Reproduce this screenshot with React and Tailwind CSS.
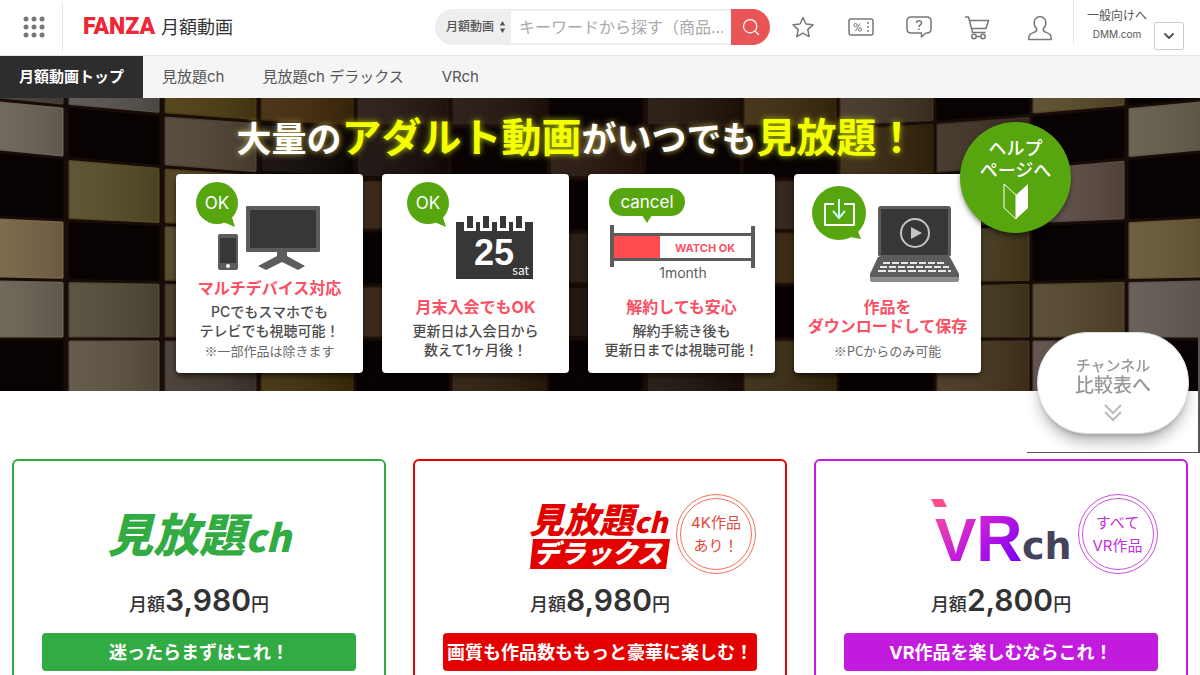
import { ChevronDown, Search } from "lucide-react";

const dark = "#080302";

// column edges of the wall, left to right
const columns = [
  [-30, 62], [70, 158], [166, 255], [262, 352], [358, 447], [453, 545], [551, 641],
  [648, 738], [745, 835], [841, 932], [938, 1028], [1034, 1123], [1130, 1222],
];

// one list per column, top to bottom
const tileColors = [
  ["#4a4038", "#6b6458", dark, "#7a6648", "#6a6455", dark],
  ["#55504a", dark, "#544a26", dark, "#504936", "#5a5040"],
  ["#4a3a10", "#4d4233", "#4a3a18", "#4a4322", "#3d3420", "#40362c"],
  ["#3f280a", "#0c0504", "#33200c", "#120905", "#33240c", "#3c2c0a"],
  ["#241610", "#140a07", "#2e1c0c", dark, "#2e1c0c", dark],
  ["#20120c", dark, "#23140a", "#160b06", dark, "#2a1a0a"],
  [dark, "#22120a", dark, "#20120a", "#160b06", dark],
  ["#20120a", dark, "#24140a", "#24160a", dark, "#1c1008"],
  ["#3a280c", dark, "#2e1e14", "#34220a", dark, "#36280e"],
  ["#3e3222", "#33240c", "#2e1e14", "#34220a", "#2e1e10", dark],
  [dark, "#3c2e22", "#3c2e1a", "#46391c", "#44371e", "#43331c"],
  ["#554828", dark, "#5a4a42", dark, "#52442a", "#5a4a44"],
  [dark, "#605a48", dark, "#655434", "#5e564e", dark],
];

const rowLines = [-26, 29, 81, 133, 187, 241, 299];
const rowDrops = [27, 27, 27, 14, 6, 0, 0];

const lineAt = (row, x) => {
  const edge = Math.max(0, (Math.abs(x - 600) / 600 - 0.4) / 0.6);
  return rowLines[row] - rowDrops[row] * Math.pow(edge, 1.3);
};

const TileWall = () => (
  <svg
    className="absolute inset-0 h-full w-full"
    viewBox="0 0 1200 293"
    preserveAspectRatio="xMidYMid slice"
    aria-hidden="true"
  >
    <defs>
      <linearGradient id="sheen" x1="0" x2="1">
        <stop offset="0" stopColor="#fff" stopOpacity="0.07" />
        <stop offset="1" stopColor="#000" stopOpacity="0.12" />
      </linearGradient>
    </defs>
    <rect width="1200" height="293" fill="#180c08" />
    {columns.map(([x1, x2], c) =>
      tileColors[c].map((color, r) => {
        const points = [
          [x1, lineAt(r, x1) + 3],
          [x2, lineAt(r, x2) + 3],
          [x2, lineAt(r + 1, x2) - 3],
          [x1, lineAt(r + 1, x1) - 3],
        ].join(" ");
        return (
          <g key={`${c}-${r}`} strokeLinejoin="round" strokeWidth="3">
            <polygon points={points} fill={color} stroke={color} />
            {color !== dark && <polygon points={points} fill="url(#sheen)" />}
          </g>
        );
      })
    )}
  </svg>
);

const OkBubble = ({ cx }) => (
  <g>
    <circle cx={cx} cy="29" r="21" fill="#58a60f" />
    <path d={`M${cx + 4} 47 L${cx + 18} 53 L${cx + 14} 40 Z`} fill="#58a60f" />
    <text x={cx} y="35" textAnchor="middle" fontSize="17" fill="#fff">OK</text>
  </g>
);

const DevicesArt = () => (
  <svg width="187" height="105" viewBox="0 0 187 105" aria-hidden="true">
    <OkBubble cx={41} />
    <rect x="42" y="60" width="20" height="36" rx="2" fill="#5c5c5c" />
    <rect x="44" y="64" width="16" height="25" fill="#373737" />
    <circle cx="52" cy="92" r="2" fill="#fff" />
    <rect x="70" y="32" width="74" height="46" rx="1" fill="#5c5c5c" />
    <rect x="74" y="36" width="66" height="38" fill="#373737" />
    <path d="M101 78 H111 V82 L129 92 L122 96 L106 88 L90 96 L82 92 L101 82 Z" fill="#5c5c5c" />
  </svg>
);

const CalendarArt = () => (
  <svg width="187" height="124" viewBox="0 0 187 124" aria-hidden="true">
    <OkBubble cx={46} />
    <rect x="74" y="48" width="77" height="57" fill="#373737" />
    {[88, 104, 121, 137].map((x) => (
      <g key={x}>
        <rect x={x - 6} y="46" width="12" height="11" fill="#fff" />
        <rect x={x - 3} y="42" width="6" height="12" fill="#373737" />
      </g>
    ))}
    <text x="112" y="91" textAnchor="middle" fontSize="36" fontWeight="700" fill="#fff" fontFamily="Liberation Sans, Arial, sans-serif">25</text>
    <text x="147" y="101" textAnchor="end" fontSize="12" fill="#fff" fontFamily="Noto Sans CJK JP, sans-serif">sat</text>
  </svg>
);

const CancelArt = () => (
  <svg width="187" height="124" viewBox="0 0 187 124" aria-hidden="true">
    <rect x="21" y="14" width="76" height="28" rx="14" fill="#58a60f" />
    <path d="M54 41 H64 L59 49 Z" fill="#58a60f" />
    <text x="59" y="34" textAnchor="middle" fontSize="17" fill="#fff">cancel</text>
    <rect x="25" y="59" width="140" height="3" fill="#5c5c5c" />
    <rect x="25" y="84" width="140" height="3" fill="#5c5c5c" />
    <rect x="26" y="62" width="46" height="22" fill="#ff4d4f" />
    <rect x="22" y="51" width="4" height="42" fill="#5c5c5c" />
    <rect x="163" y="52" width="4" height="42" fill="#5c5c5c" />
    <text x="117" y="78" textAnchor="middle" fontSize="11" fontWeight="700" fill="#fa5064">WATCH OK</text>
    <text x="95" y="104" textAnchor="middle" fontSize="14" fill="#5c5c5c">1month</text>
  </svg>
);

const DownloadArt = () => (
  <svg width="187" height="124" viewBox="0 0 187 124" aria-hidden="true">
    <circle cx="45" cy="39" r="27" fill="#58a60f" />
    <path d="M50 62 L67 65 L62 52 Z" fill="#58a60f" />
    <path d="M40 30 H31 V51 H60 V30 H50" fill="none" stroke="#fff" strokeWidth="2" strokeLinejoin="round" />
    <path d="M45 25 V43 M39 37 L45 44 L51 37" fill="none" stroke="#c9fff2" strokeWidth="2" />
    <rect x="84" y="32" width="73" height="51" rx="3" fill="#5c5c5c" />
    <rect x="87" y="35" width="67" height="46" fill="#373737" />
    <circle cx="121" cy="59" r="14" fill="none" stroke="#c4c4c4" strokeWidth="2" />
    <path d="M117 53 V65 L128 59 Z" fill="#c4c4c4" />
    <path d="M84 83 H156 L165 100 V105 Q165 108 162 108 H79 Q76 108 76 105 V100 Z" fill="#5c5c5c" />
    <path d="M76 103 H165 V105 Q165 108 162 108 H79 Q76 108 76 105 Z" fill="#8c8c8c" />
    <g stroke="#e8e8e8" strokeWidth="2">
      <path d="M89 89 H152" strokeDasharray="7 2" />
      <path d="M86 93 H155" strokeDasharray="7 2" />
      <path d="M84 97 H157" strokeDasharray="8 2" />
    </g>
  </svg>
);

const features = [
  {
    art: <DevicesArt />,
    title: ["マルチデバイス対応"],
    lines: ["PCでもスマホでも", "テレビでも視聴可能！"],
    note: "※一部作品は除きます",
  },
  {
    art: <CalendarArt />,
    title: ["月末入会でもOK"],
    lines: ["更新日は入会日から", "数えて1ヶ月後！"],
  },
  {
    art: <CancelArt />,
    title: ["解約しても安心"],
    lines: ["解約手続き後も", "更新日までは視聴可能！"],
  },
  {
    art: <DownloadArt />,
    title: ["作品を", "ダウンロードして保存"],
    lines: [],
    note: "※PCからのみ可能",
  },
];

const FeatureCard = ({ art, title, lines, note }) => (
  <li className="flex min-h-[199px] w-[187px] flex-col items-center rounded-sm bg-white pb-3 text-center whitespace-nowrap shadow-md shadow-black/50">
    {art}
    <h2 className="mb-1 text-base leading-[19px] font-bold text-[#fa5064]">
      {title.map((line) => (
        <span key={line} className="block">{line}</span>
      ))}
    </h2>
    {lines.map((line) => (
      <p key={line} className="text-sm leading-[19px] font-medium text-[#4c4c4c]">{line}</p>
    ))}
    {note && (
      <p className="mt-auto font-['Noto_Sans_CJK_JP',sans-serif] text-[13px] leading-5 text-[#6a6a6a]">{note}</p>
    )}
  </li>
);

const StarIcon = () => (
  <path d="M13 3.5 L16 10 L23 10.8 L17.8 15.6 L19.2 22.6 L13 19.1 L6.8 22.6 L8.2 15.6 L3 10.8 L10 10 Z" />
);

const CouponIcon = () => (
  <g>
    <rect x="1" y="5" width="24" height="16" rx="2" />
    <path d="M20 8 V19" strokeDasharray="2 2" />
    <circle cx="7.5" cy="11" r="1.6" strokeWidth="1" />
    <circle cx="12" cy="15.5" r="1.6" strokeWidth="1" />
    <path d="M12 9.5 L7.5 17" strokeWidth="1" />
  </g>
);

const HelpIcon = () => (
  <g>
    <path d="M5 3 H21 Q25 3 25 7 V15 Q25 19 21 19 H20 L15.5 23 V19 H5 Q1 19 1 15 V7 Q1 3 5 3 Z" />
    <path d="M10.5 9 Q10.5 6.8 13 6.8 Q15.5 6.8 15.5 9 Q15.5 10.3 14.2 11 Q13 11.6 13 13 M13 14.5 V16" />
  </g>
);

const CartIcon = () => (
  <g>
    <path d="M1 3 H4.5 L8.5 18.5 H21.5 M5.6 6.5 H24.5 L22 14.5 H7.6" />
    <circle cx="10" cy="22.5" r="2.2" />
    <circle cx="19" cy="22.5" r="2.2" />
    <path d="M12 22.5 H17" />
  </g>
);

const UserIcon = () => (
  <path d="M13 2.8 C8.8 2.8 6.8 6 7.2 9.8 C7.5 12.2 8.4 13.6 9.8 15 C10 17 9 17.8 7 18.4 C3 19.6 1.6 21 1.6 25.4 H24.4 C24.4 21 23 19.6 19 18.4 C17 17.8 16 17 16.2 15 C17.6 13.6 18.5 12.2 18.8 9.8 C19.2 6 17.2 2.8 13 2.8 Z" />
);

const headerLinks = [
  { label: "お気に入り", icon: <StarIcon /> },
  { label: "クーポン", icon: <CouponIcon /> },
  { label: "ヘルプ", icon: <HelpIcon /> },
  { label: "カート", icon: <CartIcon /> },
  { label: "アカウント", icon: <UserIcon /> },
];

const Header = () => (
  <header className="flex h-14 items-start border-b border-[#e6e6e6] bg-white">
    <button type="button" aria-label="サービス一覧" className="mt-0.5 flex h-[50px] w-[63px] items-center justify-center border-r border-[#e6e6e6] pl-1.5">
      <svg width="24" height="24" viewBox="0 0 24 24" fill="#777" aria-hidden="true">
        {[4, 12, 20].map((y) => [4, 12, 20].map((x) => <circle key={`${x}-${y}`} cx={x} cy={y} r="2.5" />))}
      </svg>
    </button>
    <a href="#" className="flex h-[55px] items-center gap-1.5 pl-5 whitespace-nowrap">
      <span className="font-['Roboto',sans-serif] text-[23px] font-black text-[#ed2736]">FANZA</span>
      <span className="text-lg text-[#333]">月額動画</span>
    </a>

    <form className="mt-[9px] ml-auto flex h-9 overflow-hidden rounded-full" onSubmit={(e) => e.preventDefault()}>
      <div className="relative">
        <select aria-label="カテゴリ" className="h-9 w-[76px] appearance-none bg-[#eee] pl-[11px] text-xs font-medium text-[#555]">
          <option>月額動画</option>
        </select>
        <svg className="pointer-events-none absolute top-3 right-[5px]" width="7" height="12" viewBox="0 0 7 12" fill="#555" aria-hidden="true">
          <path d="M3.5 0 L6.2 4.5 H0.8 Z M3.5 12 L6.2 7.5 H0.8 Z" />
        </svg>
      </div>
      <input
        type="text"
        aria-label="キーワード"
        placeholder="キーワードから探す（商品..."
        className="w-[220px] border-y-2 border-[#eee] px-2 text-[#333] outline-none placeholder:text-[#aaa]"
      />
      <button type="submit" aria-label="検索" className="flex w-[39px] items-center justify-center bg-[#e95557] text-white">
        <Search size={20} strokeWidth={1.5} />
      </button>
    </form>

    <nav aria-label="アカウントメニュー" className="mt-[14px] ml-5 flex gap-8">
      {headerLinks.map(({ label, icon }) => (
        <a key={label} href="#" aria-label={label} className="flex justify-center last:w-9">
          <svg width="26" height="28" viewBox="0 0 26 28" fill="none" stroke="#777" strokeWidth="1.5" strokeLinejoin="round" aria-hidden="true">
            {icon}
          </svg>
        </a>
      ))}
    </nav>

    <div className="ml-[15px] flex h-11 border-l border-[#e6e6e6] pt-[7px] pr-4">
      <div className="flex w-20 flex-col items-center pl-1.5 whitespace-nowrap text-[#555]">
        <a href="#" className="text-xs leading-[18px]">一般向けへ</a>
        <a href="#" className="text-[10px] leading-[18px]">DMM.com</a>
      </div>
      <button type="button" aria-label="メニューを開く" className="mt-[15px] flex h-7 w-[30px] items-center justify-center rounded-xs border border-[#ccc] bg-white text-[#555]">
        <ChevronDown size={16} strokeWidth={3} />
      </button>
    </div>
  </header>
);

const tabs = ["月額動画トップ", "見放題ch", "見放題ch デラックス", "VRch"];

const TabBar = () => (
  <nav className="flex h-[42px] bg-[#f5f5f5] text-[15px] whitespace-nowrap text-[#555]">
    {tabs.map((tab, i) => (
      <a
        key={tab}
        href="#"
        className={`flex items-center px-[19px] ${i === 0 ? "bg-[#2d2d2d] font-bold text-white" : ""}`}
      >
        {tab}
      </a>
    ))}
  </nav>
);

const Hero = () => (
  <section className="relative h-[293px] bg-[#180c08]">
    <TileWall />
    <div className="relative mx-auto w-fit pt-3 pr-[43px]">
      <h1 className="flex h-16 items-baseline justify-center pr-1 text-[35px] leading-[56px] font-bold whitespace-nowrap text-white [text-shadow:0_0_6px_#c8b85a]">
        大量の
        <span className="text-[40px] text-[#f4ff00] [text-shadow:0_0_6px_#b4c800]">アダルト動画</span>
        がいつでも
        <span className="text-[40px] text-[#f4ff00] [text-shadow:0_0_6px_#b4c800]">見放題！</span>
      </h1>
      <ul className="flex gap-[19px]">
        {features.map((feature) => (
          <FeatureCard key={feature.title[0]} {...feature} />
        ))}
      </ul>
      <a href="#" className="absolute top-6 -right-[47px] flex size-[111px] flex-col items-center rounded-full bg-[#58a60f] pt-4 text-lg leading-[22px] font-medium whitespace-nowrap text-white shadow-md shadow-black/40">
        <span>ヘルプ</span>
        <span>ページへ</span>
        <svg width="26" height="38" viewBox="0 0 26 38" aria-hidden="true">
          <path d="M1 2 L13 13 V37 L1 26 Z" fill="none" stroke="#fff" />
          <path d="M25 2 L13 13 V37 L25 26 Z" fill="#fff" />
        </svg>
      </a>
    </div>
  </section>
);

const MihodaiLogo = () => (
  <p className="pt-0.5 text-[46px] leading-[78px] font-black whitespace-nowrap text-[#32ab43] italic">
    見放題<span className="font-['Noto_Sans_CJK_JP',sans-serif] text-[38px]">ch</span>
  </p>
);

const DeluxeLogo = () => (
  <svg
    width="140"
    height="72"
    viewBox="0 0 140 72"
    className="overflow-visible"
    role="img"
    aria-label="見放題ch デラックス"
    fontWeight="900"
    fontStyle="italic"
    fontFamily="Noto Sans CJK JP, sans-serif"
  >
    <text x="-1" y="35" fontSize="35" fill="#e50000">
      見放題<tspan fontSize="28">ch</tspan>
    </text>
    <path d="M3 41 H140 L136 71 H0 Z" fill="#e50000" />
    <text x="68" y="65" textAnchor="middle" fontSize="26" fill="#fff">デラックス</text>
  </svg>
);

const VrLogo = () => (
  <svg width="141" height="76" viewBox="0 0 141 76" className="overflow-visible" role="img" aria-label="VRch" fontWeight="700" fontFamily="Liberation Sans, Arial, sans-serif">
    <defs>
      <linearGradient id="vr" gradientUnits="userSpaceOnUse" x1="10" y1="5" x2="80" y2="75">
        <stop offset="0" stopColor="#ff4f96" />
        <stop offset="0.5" stopColor="#c31bdd" />
        <stop offset="1" stopColor="#7a00f5" />
      </linearGradient>
    </defs>
    <path d="M0 3 H12 L16 11 H4 Z" fill="#ff4f8b" />
    <text x="4" y="65" fontSize="62" fill="url(#vr)">
      V<tspan fontSize="64">R</tspan>
    </text>
    <text x="91" y="63" fontSize="38" fill="#45435c" fontFamily="DejaVu Sans, sans-serif">ch</text>
  </svg>
);

const plans = [
  {
    id: "mihodai",
    logo: <MihodaiLogo />,
    price: "3,980",
    copy: "迷ったらまずはこれ！",
    border: "border-[#32ab43]",
    button: "bg-[#32ab43]",
  },
  {
    id: "deluxe",
    logo: <DeluxeLogo />,
    price: "8,980",
    copy: "画質も作品数ももっと豪華に楽しむ！",
    badge: ["4K作品", "あり！"],
    badgeStyle: "border-[#f0705a] text-[#e0483a]",
    border: "border-[#e50000]",
    button: "bg-[#e50000]",
  },
  {
    id: "vr",
    logo: <VrLogo />,
    price: "2,800",
    copy: "VR作品を楽しむならこれ！",
    badge: ["すべて", "VR作品"],
    badgeStyle: "border-[#cc4fe0] text-[#c430dc]",
    border: "border-[#c31bdd]",
    button: "bg-[#c31bdd]",
  },
];

const PlanCard = ({ logo, price, copy, badge, badgeStyle, border, button }) => (
  <article className={`rounded-md border-2 bg-white px-7 pt-[33px] pb-6 ${border}`}>
    <div className="-mx-6 grid h-20 grid-cols-[1fr_auto_1fr] items-center gap-1.5">
      <div className="col-start-2">{logo}</div>
      {badge && (
        <div className={`size-20 rounded-full border p-[3px] ${badgeStyle}`}>
          <p className="flex h-full flex-col items-center justify-center rounded-full border border-inherit text-[15px] leading-[23px] whitespace-nowrap">
            <span>{badge[0]}</span>
            <span>{badge[1]}</span>
          </p>
        </div>
      )}
    </div>
    <p className="mt-2.5 flex h-[33px] items-baseline justify-center text-lg leading-8 font-medium text-[#333]">
      月額
      <span className="text-[30px] font-semibold">{price}</span>
      円
    </p>
    <a href="#" className={`mt-4 flex h-[38px] items-center justify-center rounded-sm pt-0.5 text-lg font-bold whitespace-nowrap text-white ${button}`}>
      {copy}
    </a>
  </article>
);

const CompareLink = () => (
  <div className="fixed top-[329px] right-0 border-r-2 border-b border-[#555] pt-[3px] pr-[9px] pb-[18px] pl-[10px]">
    <a href="#" className="flex h-[102px] w-[152px] flex-col items-center rounded-[50px] border border-[#ddd] bg-white pt-[23px] font-medium whitespace-nowrap text-[#999] shadow-lg shadow-black/30">
      <span className="text-[15px] leading-5">チャンネル</span>
      <span className="text-[19px] leading-5">比較表へ</span>
      <svg className="mt-2" width="18" height="18" viewBox="0 0 18 18" fill="none" stroke="#bbb" strokeWidth="2" aria-hidden="true">
        <path d="M1 1 L9 9 L17 1 M1 8 L9 16 L17 8" />
      </svg>
    </a>
  </div>
);

export default function App() {
  return (
    <div className="bg-white font-['Inter','Noto_Sans_CJK_JP',sans-serif]" lang="ja">
      <Header />
      <TabBar />
      <main>
        <Hero />
        <section className="grid grid-cols-3 gap-[27px] px-3 pt-[68px]">
          {plans.map((plan) => (
            <PlanCard key={plan.id} {...plan} />
          ))}
        </section>
      </main>
      <CompareLink />
    </div>
  );
}
